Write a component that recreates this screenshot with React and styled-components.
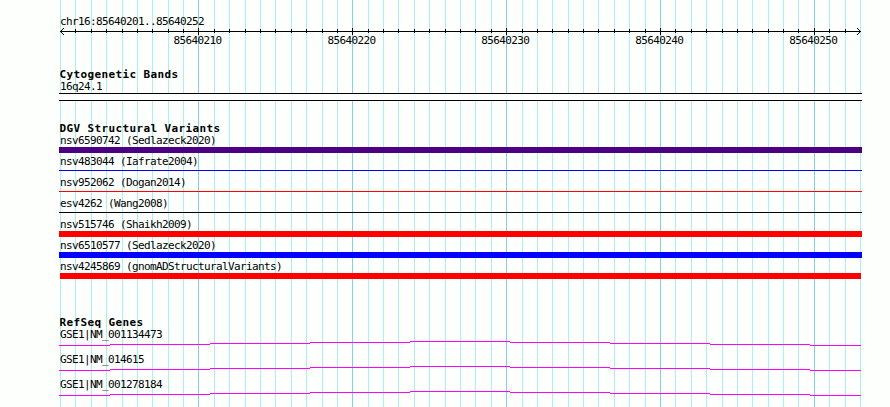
import styled, { createGlobalStyle } from "styled-components";

const START = 85640201;
const BASES = 52;

//every base gets one grid line, rounded to a whole pixel
const lines = Array.from({ length: BASES + 1 }, (_, i) => ({
    x: Math.round(60 + (i * 800) / BASES),
    position: START + i,
    major: (START + i) % 10 === 0,
}));

const variants = [
    { name: "nsv6590742 (Sedlazeck2020)", color: "#4b0082", thick: true },
    { name: "nsv483044 (Iafrate2004)", color: "#0000ff" },
    { name: "nsv952062 (Dogan2014)", color: "#ff0000" },
    { name: "esv4262 (Wang2008)", color: "#000000" },
    { name: "nsv515746 (Shaikh2009)", color: "#ff0000", thick: true },
    { name: "nsv6510577 (Sedlazeck2020)", color: "#0000ff", thick: true },
    { name: "nsv4245869 (gnomADStructuralVariants)", color: "#ff0000", thick: true, inset: true },
];

const genes = ["GSE1|NM_001134473", "GSE1|NM_014615", "GSE1|NM_001278184"];

//start x, end x and y of each piece of the intron line
const steps = [
    [0, 51, 4],
    [51, 151, 3],
    [151, 251, 2],
    [251, 351, 1],
    [351, 451, 0],
    [451, 551, 1],
    [551, 651, 2],
    [651, 751, 3],
    [751, 802, 4],
];

function Grid() {
    return (
        <GridLines width="890" height="407" shapeRendering="crispEdges">
            {lines.map((l) => (
                <rect key={l.x} x={l.x} y="0" width="1" height="407" fill={l.major ? "#87ceeb" : "#afeeee"} />
            ))}
        </GridLines>
    );
}

function Ruler() {
    return (
        <RulerBox>
            <Label>chr16:85640201..85640252</Label>
            <Axis width="803" height="9" shapeRendering="crispEdges">
                <rect x="1" y="4" width="801" height="1" />
                {lines.slice(1, -1).map((l) => (
                    <rect
                        key={l.x}
                        x={l.x - 59}
                        y={l.major ? 1 : 2}
                        width="1"
                        height={l.major ? 7 : 4}
                    />
                ))}
                {[1, 2, 3].map((n) => (
                    <g key={n}>
                        <rect x={n + 1} y={4 - n} width="1" height="1" />
                        <rect x={n + 1} y={4 + n} width="1" height="1" />
                        <rect x={801 - n} y={4 - n} width="1" height="1" />
                        <rect x={801 - n} y={4 + n} width="1" height="1" />
                    </g>
                ))}
            </Axis>
            <Numbers>
                {lines.filter((l) => l.major).map((l) => (
                    <Label key={l.x}>{l.position}</Label>
                ))}
            </Numbers>
        </RulerBox>
    );
}

export default function App() {
    return (
        <Page>
            <GlobalStyle />
            <Grid />
            <Ruler />
            <Track $gap="21px">
                <Title>Cytogenetic Bands</Title>
                <Label>16q24.1</Label>
                <Band />
            </Track>
            <Track $gap="21px">
                <Title>DGV Structural Variants</Title>
                {variants.map((v) => (
                    <Variant key={v.name}>
                        <Label>{v.name}</Label>
                        <Bar $color={v.color} $thick={v.thick} $inset={v.inset} />
                    </Variant>
                ))}
            </Track>
            <Track $gap="35px">
                <Title>RefSeq Genes</Title>
                {genes.map((g) => (
                    <Gene key={g}>
                        <Label>{g}</Label>
                        <Intron width="803" height="5" shapeRendering="crispEdges">
                            {steps.map(([from, to, y]) => (
                                <rect key={from} x={from} y={y} width={to - from} height="1" fill="#ff00ff" />
                            ))}
                        </Intron>
                    </Gene>
                ))}
            </Track>
        </Page>
    );
}

const GlobalStyle = createGlobalStyle`
  body {
    margin: 0;
    overflow: hidden;
    background: #fcfffc;
  }
`;

const Page = styled.main`
  position: relative;
  isolation: isolate;
  box-sizing: border-box;
  width: 890px;
  height: 407px;
  padding: 15px 28px 0 59px;
  overflow: hidden;
  color: #000;
  font-family: "DejaVu Sans Mono", "Liberation Mono", monospace;
`;

const GridLines = styled.svg`
  position: absolute;
  top: 0;
  left: 0;
  z-index: -1;
`;

const RulerBox = styled.header`
  height: 32px;
`;

const Label = styled.div`
  height: 12px;
  padding-left: 1px;
  font-size: 11px;
  line-height: 14px;
  letter-spacing: -0.622px;
  white-space: pre;
`;

const Axis = styled.svg`
  display: block;
`;

const Numbers = styled.div`
  display: flex;
  justify-content: space-between;
  width: 665px;
  margin: -2px 0 0 113.4px;
`;

const Track = styled.section`
  padding-top: ${(p) => p.$gap};
`;

const Title = styled.h2`
  height: 12px;
  margin: 0;
  padding-left: 0.6px;
  font-size: 11px;
  font-weight: bold;
  line-height: 14px;
  letter-spacing: 0.378px;
  white-space: pre;
`;

const Band = styled.div`
  box-sizing: border-box;
  width: 803px;
  height: 8px;
  margin-top: 1px;
  border: solid #000;
  border-width: 1px 0;
  background: #fff;
`;

const Variant = styled.div`
  height: 21px;
`;

const Bar = styled.div`
  width: ${(p) => (p.$inset ? 801 : 803)}px;
  height: ${(p) => (p.$thick ? 6 : 1)}px;
  margin-top: ${(p) => (p.$thick ? 1 : 3)}px;
  margin-left: ${(p) => (p.$inset ? 1 : 0)}px;
  background: ${(p) => p.$color};
`;

const Gene = styled.div`
  height: 25px;
`;

const Intron = styled.svg`
  display: block;
  margin-top: 1px;
`;
